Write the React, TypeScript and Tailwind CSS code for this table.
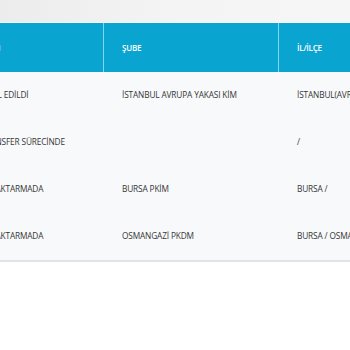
import React from "react";

const rows = [
    { durum: "İPTAL EDİLDİ", sube: "İSTANBUL AVRUPA YAKASI KİM", il: "İSTANBUL(AVRUPA) / ŞİŞLİ" },
    { durum: "TRANSFER SÜRECİNDE", sube: "", il: "/" },
    { durum: "DIŞ AKTARMADA", sube: "BURSA PKİM", il: "BURSA /" },
    { durum: "DIŞ AKTARMADA", sube: "OSMANGAZİ PKDM", il: "BURSA / OSMANGAZİ" },
];

export default function App() {
    return (
        <div
            className="w-[350px] h-[350px] overflow-hidden bg-white"
            style={{ fontFamily: '"Open Sans", "Liberation Sans", sans-serif' }}
        >
            {/* blurred photo strip above the table */}
            <div className="h-[23px] bg-gradient-to-r from-[#ececec] via-[#f4f4f4] to-[#f6f6f6] border-b border-[#fafafa]" />

            <div className="ml-[-37px] w-[580px] border-b-2 border-[#e2e3e5]">
                <div className="flex h-[49px] bg-[#0aa4d1] text-white text-[8px] font-semibold tracking-[-0.2px] uppercase">
                    <div className="w-[141px] flex items-center pl-[15.5px] border-r border-[#7fd8f0]">İŞLEM</div>
                    <div className="w-[175px] flex items-center pl-[18px] border-r border-[#7fd8f0]">ŞUBE</div>
                    <div className="flex-1 flex items-center pl-[18px]">İL/İLÇE</div>
                </div>
                <div className="bg-[#f8f9fa] text-[#363636] text-[8.3px] font-medium tracking-[-0.15px] uppercase">
                    {rows.map((r, i) => (
                        <div key={i} className="flex h-[47px]">
                            <div className="w-[141px] flex items-center pl-[18px] whitespace-nowrap">{r.durum}</div>
                            <div className="w-[175px] flex items-center pl-[18px] whitespace-nowrap">{r.sube}</div>
                            <div className="flex-1 flex items-center pl-[18px] whitespace-nowrap">{r.il}</div>
                        </div>
                    ))}
                </div>
            </div>
        </div>
    );
}
